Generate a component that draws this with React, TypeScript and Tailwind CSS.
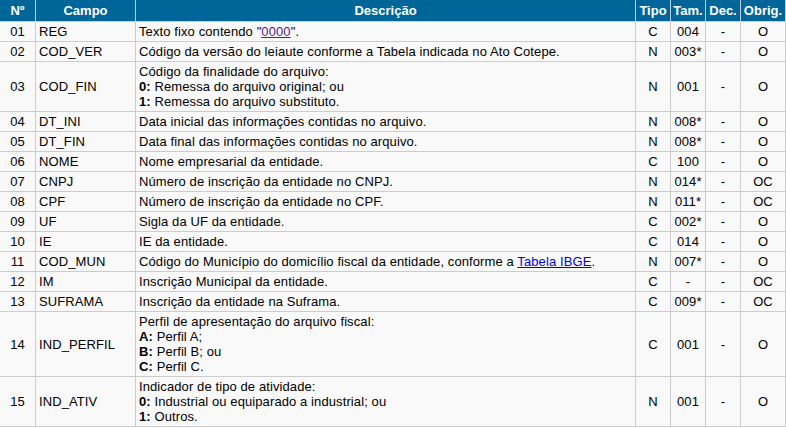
import React from "react";

type Row = {
  n: string;
  campo: string;
  desc: React.ReactNode;
  tipo: string;
  tam: string;
  dec: string;
  obrig: string;
};

const B = ({ children }: { children: React.ReactNode }) => (
  <span className="font-bold">{children}</span>
);

const rows: Row[] = [
  {
    n: "01",
    campo: "REG",
    desc: (
      <>
        Texto fixo contendo "
        <a href="#" className="text-[#551a8b] underline">
          0000
        </a>
        ".
      </>
    ),
    tipo: "C",
    tam: "004",
    dec: "-",
    obrig: "O",
  },
  {
    n: "02",
    campo: "COD_VER",
    desc: "Código da versão do leiaute conforme a Tabela indicada no Ato Cotepe.",
    tipo: "N",
    tam: "003*",
    dec: "-",
    obrig: "O",
  },
  {
    n: "03",
    campo: "COD_FIN",
    desc: (
      <>
        Código da finalidade do arquivo:
        <br />
        <B>0:</B> Remessa do arquivo original; ou
        <br />
        <B>1:</B> Remessa do arquivo substituto.
      </>
    ),
    tipo: "N",
    tam: "001",
    dec: "-",
    obrig: "O",
  },
  {
    n: "04",
    campo: "DT_INI",
    desc: "Data inicial das informações contidas no arquivo.",
    tipo: "N",
    tam: "008*",
    dec: "-",
    obrig: "O",
  },
  {
    n: "05",
    campo: "DT_FIN",
    desc: "Data final das informações contidas no arquivo.",
    tipo: "N",
    tam: "008*",
    dec: "-",
    obrig: "O",
  },
  {
    n: "06",
    campo: "NOME",
    desc: "Nome empresarial da entidade.",
    tipo: "C",
    tam: "100",
    dec: "-",
    obrig: "O",
  },
  {
    n: "07",
    campo: "CNPJ",
    desc: "Número de inscrição da entidade no CNPJ.",
    tipo: "N",
    tam: "014*",
    dec: "-",
    obrig: "OC",
  },
  {
    n: "08",
    campo: "CPF",
    desc: "Número de inscrição da entidade no CPF.",
    tipo: "N",
    tam: "011*",
    dec: "-",
    obrig: "OC",
  },
  {
    n: "09",
    campo: "UF",
    desc: "Sigla da UF da entidade.",
    tipo: "C",
    tam: "002*",
    dec: "-",
    obrig: "O",
  },
  {
    n: "10",
    campo: "IE",
    desc: "IE da entidade.",
    tipo: "C",
    tam: "014",
    dec: "-",
    obrig: "O",
  },
  {
    n: "11",
    campo: "COD_MUN",
    desc: (
      <>
        Código do Município do domicílio fiscal da entidade, conforme a{" "}
        <a href="#" className="text-[#0000ee] underline">
          Tabela IBGE
        </a>
        .
      </>
    ),
    tipo: "N",
    tam: "007*",
    dec: "-",
    obrig: "O",
  },
  {
    n: "12",
    campo: "IM",
    desc: "Inscrição Municipal da entidade.",
    tipo: "C",
    tam: "-",
    dec: "-",
    obrig: "OC",
  },
  {
    n: "13",
    campo: "SUFRAMA",
    desc: "Inscrição da entidade na Suframa.",
    tipo: "C",
    tam: "009*",
    dec: "-",
    obrig: "OC",
  },
  {
    n: "14",
    campo: "IND_PERFIL",
    desc: (
      <>
        Perfil de apresentação do arquivo fiscal:
        <br />
        <B>A:</B> Perfil A;
        <br />
        <B>B:</B> Perfil B; ou
        <br />
        <B>C:</B> Perfil C.
      </>
    ),
    tipo: "C",
    tam: "001",
    dec: "-",
    obrig: "O",
  },
  {
    n: "15",
    campo: "IND_ATIV",
    desc: (
      <>
        Indicador de tipo de atividade:
        <br />
        <B>0:</B> Industrial ou equiparado a industrial; ou
        <br />
        <B>1:</B> Outros.
      </>
    ),
    tipo: "N",
    tam: "001",
    dec: "-",
    obrig: "O",
  },
];

const cols = "grid grid-cols-[35px_99px_499px_34px_34px_34px_44px] gap-px";
const cell =
  "bg-[#f9f9f9] py-[2px] leading-[15px] flex items-center tracking-[0.1px]";
const hcell =
  "bg-[#006699] text-white font-bold h-[21px] leading-[15px] flex items-center justify-center";

export default function App() {
  return (
    <div
      className="w-[786px] bg-white text-[13px] text-black"
      style={{ fontFamily: '"Liberation Sans", Arial, sans-serif' }}
    >
      <div className="bg-[#cccccc] pr-px pb-px">
        <div className={`${cols} bg-[#b9cddc]`}>
          <div className={hcell}>Nº</div>
          <div className={hcell}>Campo</div>
          <div className={hcell}>Descrição</div>
          <div className={hcell}>Tipo</div>
          <div className={hcell}>Tam.</div>
          <div className={hcell}>Dec.</div>
          <div className={hcell}>Obrig.</div>
        </div>
        <div className={`${cols} pt-px`}>
          {rows.map((r) => (
            <React.Fragment key={r.n}>
              <div className={`${cell} justify-center`}>{r.n}</div>
              <div className={`${cell} px-[3px]`}>{r.campo}</div>
              <div className={`${cell} px-[3px]`}>
                <div>{r.desc}</div>
              </div>
              <div className={`${cell} justify-center`}>{r.tipo}</div>
              <div className={`${cell} justify-center`}>{r.tam}</div>
              <div className={`${cell} justify-center`}>{r.dec}</div>
              <div className={`${cell} justify-center`}>{r.obrig}</div>
            </React.Fragment>
          ))}
        </div>
      </div>
    </div>
  );
}
